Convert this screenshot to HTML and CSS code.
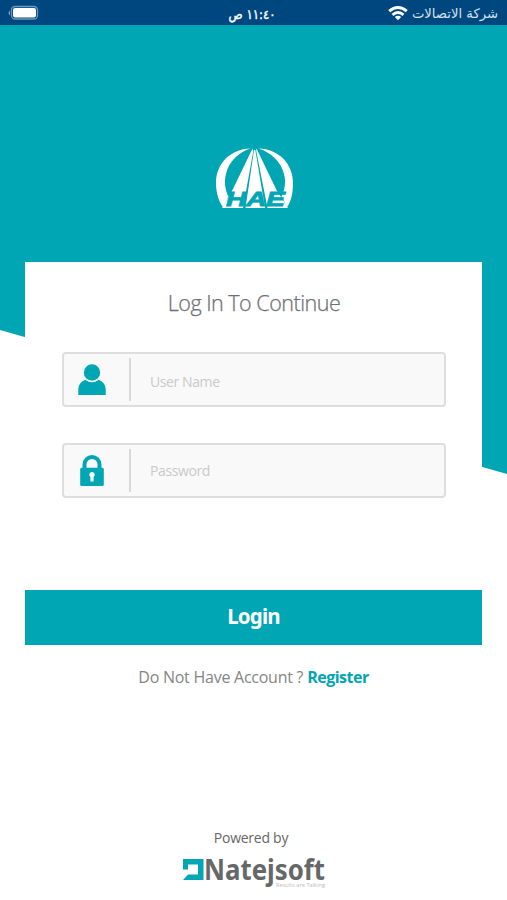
FILE: index.html
```html
<!DOCTYPE html>
<html lang="en">
<head>
<meta charset="utf-8">
<title>Log In</title>
<link rel="stylesheet" href="styles.css">
</head>
<body>
<div class="app">
  <header class="status">
    <svg class="battery" width="32" height="16" viewBox="0 0 32 16"><path d="M3 5.5Q0 8 3 10.5Z" fill="#7ba3c4"/><rect x="4.5" y="1.500" width="26" height="12.500" rx="3.500" fill="none" stroke="#6d99bd" stroke-width="1.300"/><rect x="6" y="3" width="23" height="9.500" rx="2" fill="#fff"/></svg>
    <span class="time" dir="rtl" lang="ar">١١:٤٠ ص</span>
    <div class="carrier">
      <svg width="20" height="15" viewBox="0 0 20 15" fill="none" stroke="#fff" stroke-width="2.900"><path d="M1.200 5.200Q10-2.200 18.800 5.200M4.500 8.900Q10 4.300 15.500 8.900"/><path d="M6.800 11.100Q10 8.300 13.200 11.100L10 14.300Z" fill="#fff" stroke="none"/></svg>
      <span class="name" dir="rtl" lang="ar">شركة الاتصالات</span>
    </div>
  </header>
  <div class="brand">
    <svg width="80" height="64" viewBox="0 0 80 64">
      <path d="M35.500 1.500C15 2 1 17 1 36C1 46 4 55 8 60L13.500 49.500C10 43 9 34 11 27C14 14 24 5 35.500 1.500Z" fill="#fff"/>
      <path d="M43.500 1.500C64 2 78 17 78 36C78 46 76 55 72 60L66.500 49.500C70 43 71 34 69 27C66 14 55 5 43.500 1.500Z" fill="#fff"/>
      <path d="M37.500 1.500L17.500 43L7 61H28L38.300 4Z" fill="#fff"/>
      <path d="M39 3L30.500 61H50L40.300 3Z" fill="#fff"/>
      <path d="M41.500 1.500L61.500 43L73 61H52.500L41.200 4Z" fill="#fff"/>
      <text x="11" y="58.500" textLength="59" lengthAdjust="spacingAndGlyphs" class="hae">HAE</text>
    </svg>
  </div>
  <main class="card">
    <h1>Log In To Continue</h1>
    <label class="field">
      <span class="icon"><svg width="28" height="32" viewBox="0 0 28 32" fill="#00a6b4"><circle cx="14" cy="8.500" r="8.200"/><path d="M.3 31V25Q1 18 7.300 15.800Q14 20.800 20.700 15.800Q27 18 27.700 25V31Z"/></svg></span>
      <input type="text" placeholder="User Name">
    </label>
    <label class="field password">
      <span class="icon"><svg width="24" height="32" viewBox="0 0 24 32"><path d="M4.500 14V9.500a7.500 7.500 0 0 1 15 0V14" fill="none" stroke="#00a6b4" stroke-width="4"/><rect x=".2" y="12.700" width="23.600" height="18.300" rx="1.500" fill="#00a6b4"/><path d="M12 17a2.700 2.700 0 0 1 1.600 4.900V26.500H10.400V21.900A2.700 2.700 0 0 1 12 17Z" fill="#fff"/></svg></span>
      <input type="password" placeholder="Password">
    </label>
  </main>
  <button class="login">Login</button>
  <p class="signup"><span class="ask">Do Not Have Account ?</span> <a class="register">Register</a></p>
  <footer class="powered">
    <span class="by">Powered by</span>
    <svg class="maker-logo" width="144" height="46" viewBox="0 0 144 46">
      <path d="M1 10H21.500V31H1L6 25.500H16V15.500H6V20.500H1Z" fill="#00a6b4"/>
      <text x="22" y="30.500" textLength="121" lengthAdjust="spacingAndGlyphs" class="maker">Natejsoft</text>
      <text x="94" y="37.500" textLength="49" lengthAdjust="spacingAndGlyphs" class="tagline">Results are Talking</text>
    </svg>
  </footer>
</div>
</body>
</html>
```
FILE: styles.css
```css
* { box-sizing: border-box; }
body { margin: 0; background: #fff; font-family: "Open Sans", "Noto Sans", sans-serif; }
.app { position: relative; height: 900px; display: flex; flex-direction: column; isolation: isolate; }
.app::before {
  content: "";
  position: absolute;
  inset: 0 0 auto;
  height: 474px;
  background: #00a6b4;
  clip-path: polygon(0 0, 100% 0, 100% 474px, 0 330px);
  z-index: -1;
}
.status { height: 25px; background: #00467f; color: #fff; display: grid; grid-template-columns: 1fr auto 1fr; align-items: center; padding: 0 9px 0 7px; font: 13px/25px "DejaVu Sans", sans-serif; }
.time { font-size: 13px; -webkit-text-stroke: .4px #fff; transform: translateY(1px) scaleX(.9); }
.carrier { display: flex; justify-content: flex-end; align-items: center; gap: 4px; }
.name { color: #d7e3ee; padding-top: 1px; font-size: 13.2px; }
.brand { height: 237px; display: flex; justify-content: center; padding: 122px 0 0 2px; }
.hae { font: italic bold 20px "Liberation Sans", sans-serif; fill: #00a6b4; stroke: #00a6b4; stroke-width: .8px; }
.card { margin: 0 25px; height: 328px; background: #fff; padding: 25px 36px 0 37px; }
h1 { margin: 0 0 33px; text-align: center; font: 300 21.5px/32px "Open Sans", sans-serif; color: #6d7073; letter-spacing: -.5px; -webkit-text-stroke: .25px #6d7073; }
.field { display: flex; align-items: center; height: 55px; margin-bottom: 37px; border: 2px solid #dedede; border-radius: 4px; background: #f9f9f9; }
.field.password { margin-top: -1px; }
.icon { width: 67px; height: 43px; flex: none; display: flex; align-items: center; justify-content: center; padding-right: 9px; border-right: 2px solid #d9d9d9; }
.field input { flex: 1; min-width: 0; border: 0; outline: 0; background: none; padding: 4px 0 0 19px; font: 14px "Open Sans", sans-serif; letter-spacing: -.4px; }
.field.password input { padding: 0 0 1px 19px; }
.field input::placeholder { color: #c9c9c9; opacity: 1; }
.login { margin: 0 25px; height: 55px; border: 0; background: #00a6b4; color: #fff; font: 700 20.5px/52px "Noto Sans", sans-serif; letter-spacing: -.8px; padding: 0 0 3px; }
.signup { margin: 20px 0 0; text-align: center; font-size: 16px; line-height: 24px; color: #858585; white-space: nowrap; letter-spacing: -.25px; }
.register { color: #00a6b4; font-weight: 700; letter-spacing: -.5px; }
.powered { margin-top: auto; height: 73px; display: flex; flex-direction: column; align-items: center; }
.by { font-size: 14px; line-height: 22px; color: #666; letter-spacing: -.25px; margin-right: 5px; }
.maker-logo { flex: none; }
.maker { font: bold 29px "Noto Sans", sans-serif; fill: #666769; }
.tagline { font: 6px "Open Sans", sans-serif; fill: #bbb; }
```
